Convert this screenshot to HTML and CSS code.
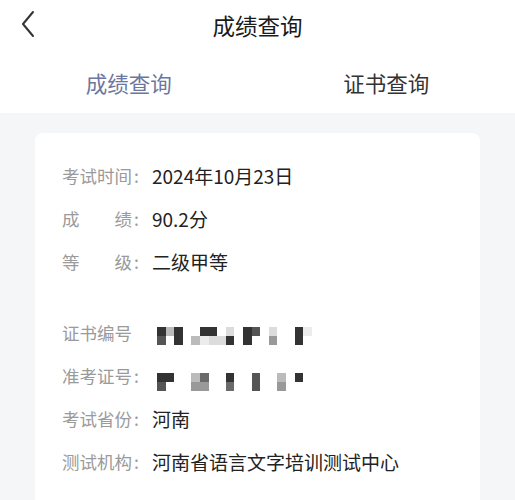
FILE: index.html
```html
<!DOCTYPE html>
<html lang="zh-CN">
<head>
  <meta charset="UTF-8" />
  <meta name="viewport" content="width=device-width, initial-scale=1.0"/>
  <title>成绩查询</title>
  <link rel="stylesheet" href="styles.css">
</head>
<body>

<!-- Top bar -->
<header class="topbar">
  <span class="back">
    <svg width="14" height="28" viewBox="0 0 14 28"><path d="M12 2 L2 14 L12 26" fill="none" stroke="#333" stroke-width="2" stroke-linecap="round" stroke-linejoin="round"/></svg>
  </span>
  <h1>成绩查询</h1>
  <span></span>
</header>

<!-- Tabs -->
<nav class="tabs">
  <div class="tab active">成绩查询</div>
  <div class="tab">证书查询</div>
</nav>

<main class="content">
  <section class="card">
    <div class="group">
      <div class="row"><span class="label">考试时间</span><span class="colon">:</span><span class="value">2024年10月23日</span></div>
      <div class="row"><span class="label">成绩</span><span class="colon">:</span><span class="value">90.2分</span></div>
      <div class="row"><span class="label">等级</span><span class="colon">:</span><span class="value">二级甲等</span></div>
    </div>

    <div class="group second">
      <div class="row">
        <span class="label">证书编号</span><span class="colon"></span>
        <span class="mosaic">
          <i class="k1"></i><i class="k5"></i><i class="k1"></i><i></i><i></i><i class="k1"></i><i class="k1"></i><i></i><i class="k6"></i><i></i><i class="k1"></i><i class="k2"></i><i></i><i class="k6"></i><i></i><i></i><i class="k1"></i><i class="k7"></i>
          <i class="k2"></i><i></i><i class="k1"></i><i></i><i class="k5"></i><i class="k7"></i><i class="k6"></i><i class="k6"></i><i class="k1"></i><i></i><i class="k1"></i><i></i><i></i><i class="k4"></i><i></i><i></i><i class="k1"></i><i></i>
        </span>
      </div>
      <div class="row">
        <span class="label">准考证号</span><span class="colon">:</span>
        <span class="mosaic low">
          <i class="k1"></i><i class="k1"></i><i></i><i></i><i class="k5"></i><i class="k3"></i><i></i><i></i><i class="k1"></i><i></i><i></i><i class="k2"></i><i></i><i></i><i class="k5"></i><i></i><i class="k1"></i><i></i>
          <i class="k2"></i><i></i><i></i><i></i><i class="k4"></i><i class="k4"></i><i></i><i></i><i class="k3"></i><i></i><i></i><i class="k2"></i><i></i><i></i><i class="k4"></i><i></i><i></i><i></i>
        </span>
      </div>
      <div class="row"><span class="label">考试省份</span><span class="colon">:</span><span class="value">河南</span></div>
      <div class="row"><span class="label">测试机构</span><span class="colon">:</span><span class="value">河南省语言文字培训测试中心</span></div>
    </div>
  </section>
</main>

</body>
</html>
```

FILE: styles.css
```css
body {
  margin: 0;
  padding: 0;
  background-color: #ffffff;
  font-family: "Noto Sans CJK SC", "Noto Sans", sans-serif;
  color: #222;
}

.topbar {
  display: grid;
  grid-template-columns: 60px 1fr 60px;
  align-items: center;
  height: 48px;
}

.back {
  display: flex;
  align-items: center;
  padding-left: 21px;
}

.topbar h1 {
  margin: 0;
  text-align: center;
  font-size: 22.5px;
  font-weight: 400;
  color: #1a1a1a;
  padding-top: 1px;
}

.tabs {
  display: flex;
  height: 65px;
}

.tab {
  flex: 1;
  display: flex;
  justify-content: center;
  align-items: center;
  padding-top: 3px;
  font-size: 21.5px;
  color: #333;
}

.tab.active {
  color: #6c77a0;
}

.content {
  background-color: #f5f6f8;
  padding: 20px 35px 0 35px;
  min-height: 400px;
}

.card {
  background-color: #ffffff;
  border-radius: 8px;
  padding: 21px 27px 24px 27px;
}

.group.second {
  margin-top: 28px;
}

.row {
  display: flex;
  align-items: center;
  height: 43px;
}

.label {
  width: 70px;
  text-align: justify;
  text-align-last: justify;
  font-size: 17.5px;
  color: #9a9a9a;
}

.colon {
  width: 20px;
  padding-left: 2px;
  box-sizing: border-box;
  font-size: 17.5px;
  color: #9a9a9a;
}

.value {
  font-size: 19px;
  color: #222;
}

.mosaic {
  display: grid;
  grid-template-columns: repeat(18, 8.6px);
  grid-template-rows: 9px 9px;
  margin-left: 5px;
  margin-top: 6px;
  filter: blur(0.4px);
}

.mosaic.low {
  margin-top: 12px;
}

.k1 { background-color: #333; }
.k2 { background-color: #555; }
.k3 { background-color: #6a6a6a; }
.k4 { background-color: #999; }
.k5 { background-color: #bbb; }
.k6 { background-color: #dcdcdc; }
.k7 { background-color: #ececec; }
```
